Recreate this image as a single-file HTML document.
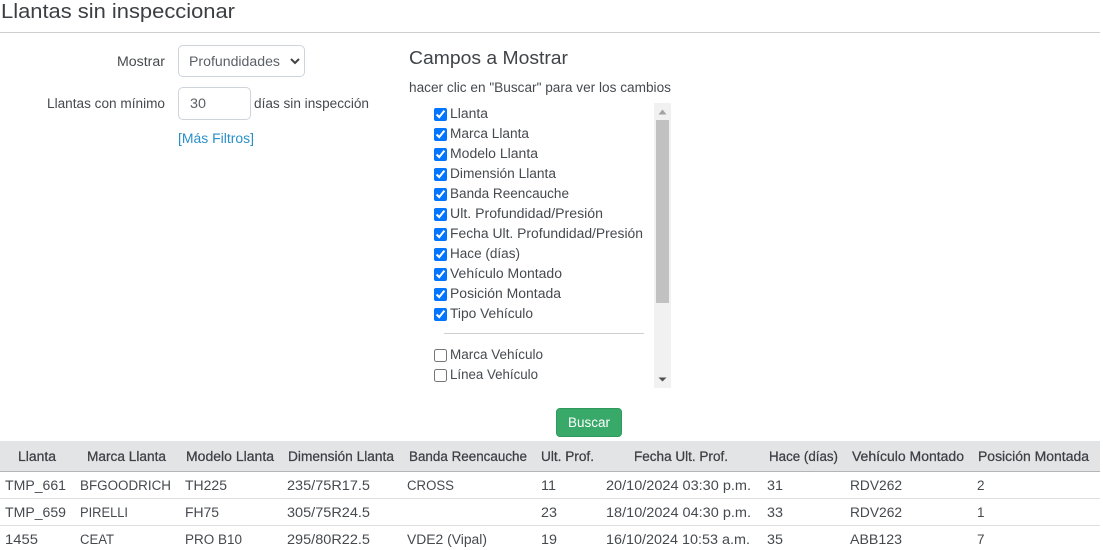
<!DOCTYPE html>
<html lang="es">
<head>
<meta charset="utf-8">
<title>Llantas sin inspeccionar</title>
<style>
html,body{margin:0;padding:0;background:#fff;width:1103px;height:550px;overflow:hidden}
body{position:relative;font-family:"Liberation Sans",sans-serif}
.a{position:absolute;box-sizing:border-box}
input[type=checkbox]{position:absolute;margin:0;width:13px;height:13px}
svg{position:absolute;left:0;top:0;pointer-events:none}
text{font-family:"Liberation Sans",sans-serif;font-size:13.5px;fill:#454a4f}
.h{stroke:#3c4045;stroke-width:.25px;fill:#3c4045}
</style>
</head>
<body>
<div class="a" style="left:0;top:32px;width:1100px;height:1px;background:#cfcfcf"></div>

<div class="a" style="left:178px;top:45px;width:127px;height:32px;border:1px solid #ced4da;border-radius:5px;background:#fff"></div>
<div class="a" style="left:178px;top:87px;width:73px;height:33px;border:1px solid #ced4da;border-radius:5px;background:#fff"></div>

<div class="a" style="left:654px;top:103px;width:17px;height:285px;background:#f1f1f1"></div>
<div class="a" style="left:656px;top:120px;width:13px;height:183px;background:#c1c1c1"></div>
<div class="a" style="left:444px;top:333px;width:200px;height:1px;background:#cfcfcf"></div>

<input type="checkbox" checked style="left:434px;top:108px">
<input type="checkbox" checked style="left:434px;top:128px">
<input type="checkbox" checked style="left:434px;top:148px">
<input type="checkbox" checked style="left:434px;top:168px">
<input type="checkbox" checked style="left:434px;top:188px">
<input type="checkbox" checked style="left:434px;top:208px">
<input type="checkbox" checked style="left:434px;top:228px">
<input type="checkbox" checked style="left:434px;top:248px">
<input type="checkbox" checked style="left:434px;top:268px">
<input type="checkbox" checked style="left:434px;top:288px">
<input type="checkbox" checked style="left:434px;top:308px">
<input type="checkbox" style="left:434px;top:349px">
<input type="checkbox" style="left:434px;top:369px">

<div class="a" style="left:556px;top:408px;width:66px;height:29px;background:#38a968;border:1px solid #2f9a5c;border-radius:4px"></div>

<div class="a" style="left:0;top:441px;width:1100px;height:30px;background:#e3e4e6"></div>
<div class="a" style="left:0;top:471px;width:1100px;height:1px;background:#b4b5b7"></div>
<div class="a" style="left:0;top:498px;width:1100px;height:1px;background:#dedfe0"></div>
<div class="a" style="left:0;top:525px;width:1100px;height:1px;background:#dedfe0"></div>

<svg width="1103" height="550" viewBox="0 0 1103 550" xmlns="http://www.w3.org/2000/svg">
<text x="1" y="18" textLength="234" lengthAdjust="spacingAndGlyphs" style="font-size:20px;fill:#3a3f44">Llantas sin inspeccionar</text>

<text x="117" y="66" textLength="48" lengthAdjust="spacingAndGlyphs">Mostrar</text>
<text x="189" y="66" textLength="91" lengthAdjust="spacingAndGlyphs" style="fill:#5b6167">Profundidades</text>
<path d="M291 59l4 4 4-4" fill="none" stroke="#444" stroke-width="2"/>
<text x="47" y="108" textLength="118" lengthAdjust="spacingAndGlyphs">Llantas con mínimo</text>
<text x="190" y="108" textLength="16" lengthAdjust="spacingAndGlyphs" style="fill:#5b6167">30</text>
<text x="254" y="108" textLength="115" lengthAdjust="spacingAndGlyphs">días sin inspección</text>
<text x="178" y="143" textLength="76" lengthAdjust="spacingAndGlyphs" style="fill:#2a8fc9">[Más Filtros]</text>

<text x="409" y="64" textLength="159" lengthAdjust="spacingAndGlyphs" style="font-size:18px;fill:#3f4449">Campos a Mostrar</text>
<text x="409" y="92" textLength="262" lengthAdjust="spacingAndGlyphs">hacer clic en "Buscar" para ver los cambios</text>

<text x="450" y="118" textLength="38" lengthAdjust="spacingAndGlyphs">Llanta</text>
<text x="450" y="138" textLength="79" lengthAdjust="spacingAndGlyphs">Marca Llanta</text>
<text x="450" y="158" textLength="88" lengthAdjust="spacingAndGlyphs">Modelo Llanta</text>
<text x="450" y="178" textLength="106" lengthAdjust="spacingAndGlyphs">Dimensión Llanta</text>
<text x="450" y="198" textLength="119" lengthAdjust="spacingAndGlyphs">Banda Reencauche</text>
<text x="450" y="218" textLength="153" lengthAdjust="spacingAndGlyphs">Ult. Profundidad/Presión</text>
<text x="450" y="238" textLength="193" lengthAdjust="spacingAndGlyphs">Fecha Ult. Profundidad/Presión</text>
<text x="450" y="258" textLength="70" lengthAdjust="spacingAndGlyphs">Hace (días)</text>
<text x="450" y="278" textLength="112" lengthAdjust="spacingAndGlyphs">Vehículo Montado</text>
<text x="450" y="298" textLength="111" lengthAdjust="spacingAndGlyphs">Posición Montada</text>
<text x="450" y="318" textLength="83" lengthAdjust="spacingAndGlyphs">Tipo Vehículo</text>
<text x="450" y="359" textLength="93" lengthAdjust="spacingAndGlyphs">Marca Vehículo</text>
<text x="450" y="379" textLength="88" lengthAdjust="spacingAndGlyphs">Línea Vehículo</text>

<path d="M658.5 114.5l4-5 4 5z" fill="#a3a3a3"/>
<path d="M658.5 377.5l4 4 4-4z" fill="#505050"/>

<text x="568" y="427" textLength="42" lengthAdjust="spacingAndGlyphs" style="fill:#fff">Buscar</text>

<text class="h" x="18" y="461" textLength="38" lengthAdjust="spacingAndGlyphs">Llanta</text>
<text class="h" x="87" y="461" textLength="79" lengthAdjust="spacingAndGlyphs">Marca Llanta</text>
<text class="h" x="186" y="461" textLength="88" lengthAdjust="spacingAndGlyphs">Modelo Llanta</text>
<text class="h" x="288" y="461" textLength="106" lengthAdjust="spacingAndGlyphs">Dimensión Llanta</text>
<text class="h" x="409" y="461" textLength="118" lengthAdjust="spacingAndGlyphs">Banda Reencauche</text>
<text class="h" x="541" y="461" textLength="53" lengthAdjust="spacingAndGlyphs">Ult. Prof.</text>
<text class="h" x="634" y="461" textLength="94" lengthAdjust="spacingAndGlyphs">Fecha Ult. Prof.</text>
<text class="h" x="769" y="461" textLength="69" lengthAdjust="spacingAndGlyphs">Hace (días)</text>
<text class="h" x="852" y="461" textLength="112" lengthAdjust="spacingAndGlyphs">Vehículo Montado</text>
<text class="h" x="978" y="461" textLength="111" lengthAdjust="spacingAndGlyphs">Posición Montada</text>

<text x="5" y="490" textLength="61" lengthAdjust="spacingAndGlyphs">TMP_661</text>
<text x="80" y="490" textLength="91" lengthAdjust="spacingAndGlyphs">BFGOODRICH</text>
<text x="185" y="490" textLength="42" lengthAdjust="spacingAndGlyphs">TH225</text>
<text x="287" y="490" textLength="83" lengthAdjust="spacingAndGlyphs">235/75R17.5</text>
<text x="407" y="490" textLength="47" lengthAdjust="spacingAndGlyphs">CROSS</text>
<text x="541" y="490" textLength="15" lengthAdjust="spacingAndGlyphs">11</text>
<text x="606" y="490" textLength="145" lengthAdjust="spacingAndGlyphs">20/10/2024 03:30 p.m.</text>
<text x="767" y="490" textLength="16" lengthAdjust="spacingAndGlyphs">31</text>
<text x="850" y="490" textLength="52" lengthAdjust="spacingAndGlyphs">RDV262</text>
<text x="977" y="490">2</text>

<text x="5" y="517" textLength="61" lengthAdjust="spacingAndGlyphs">TMP_659</text>
<text x="80" y="517" textLength="48" lengthAdjust="spacingAndGlyphs">PIRELLI</text>
<text x="185" y="517" textLength="34" lengthAdjust="spacingAndGlyphs">FH75</text>
<text x="287" y="517" textLength="83" lengthAdjust="spacingAndGlyphs">305/75R24.5</text>
<text x="541" y="517" textLength="16" lengthAdjust="spacingAndGlyphs">23</text>
<text x="606" y="517" textLength="145" lengthAdjust="spacingAndGlyphs">18/10/2024 04:30 p.m.</text>
<text x="767" y="517" textLength="16" lengthAdjust="spacingAndGlyphs">33</text>
<text x="850" y="517" textLength="52" lengthAdjust="spacingAndGlyphs">RDV262</text>
<text x="977" y="517">1</text>

<text x="5" y="544" textLength="33" lengthAdjust="spacingAndGlyphs">1455</text>
<text x="80" y="544" textLength="34" lengthAdjust="spacingAndGlyphs">CEAT</text>
<text x="185" y="544" textLength="57" lengthAdjust="spacingAndGlyphs">PRO B10</text>
<text x="287" y="544" textLength="83" lengthAdjust="spacingAndGlyphs">295/80R22.5</text>
<text x="407" y="544" textLength="80" lengthAdjust="spacingAndGlyphs">VDE2 (Vipal)</text>
<text x="541" y="544" textLength="16" lengthAdjust="spacingAndGlyphs">19</text>
<text x="606" y="544" textLength="144" lengthAdjust="spacingAndGlyphs">16/10/2024 10:53 a.m.</text>
<text x="767" y="544" textLength="16" lengthAdjust="spacingAndGlyphs">35</text>
<text x="850" y="544" textLength="52" lengthAdjust="spacingAndGlyphs">ABB123</text>
<text x="977" y="544">7</text>
</svg>
</body>
</html>
